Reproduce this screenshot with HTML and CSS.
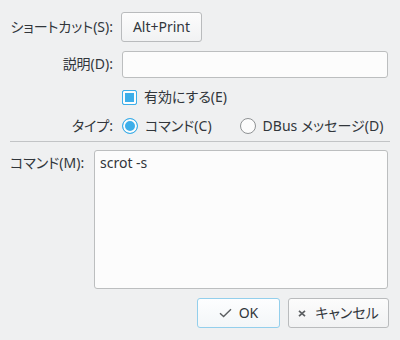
FILE: index.html
```html
<!DOCTYPE html>
<html lang="ja">
<head>
    <meta charset="UTF-8">
    <title>ショートカットの編集</title>
    <link rel="stylesheet" href="styles.css">
</head>
<body>
    <div class="dialog">
        <div class="form">
            <label class="lbl">ショートカット(S):</label>
            <div><button class="btn key">Alt+Print</button></div>

            <label class="lbl" for="desc">説明(D):</label>
            <input class="field" id="desc" type="text">

            <span></span>
            <label class="check"><span class="box"></span>有効にする(E)</label>

            <span class="lbl">タイプ:</span>
            <div class="radios">
                <label class="radio"><span class="dot on"></span>コマンド(C)</label>
                <label class="radio"><span class="dot"></span>DBus メッセージ(D)</label>
            </div>
        </div>

        <div class="sep"></div>

        <div class="cmd">
            <label class="lbl top" for="cmd">コマンド(M):</label>
            <textarea id="cmd" class="area">scrot -s</textarea>
        </div>

        <div class="actions">
            <button class="btn ok">
                <svg width="13" height="10" viewBox="0 0 13 10"><path d="M1 5.2 L4.6 8.6 L12 1.2" fill="none" stroke="#5b5e61" stroke-width="1.4"/></svg>
                OK
            </button>
            <button class="btn cancel">
                <svg width="8" height="7" viewBox="0 0 8 7"><path d="M1 0.8 L7 6.2 M7 0.8 L1 6.2" fill="none" stroke="#5b5e61" stroke-width="1.7"/></svg>
                キャンセル
            </button>
        </div>
    </div>
</body>
</html>
```

FILE: styles.css
```css
body {
    margin: 0;
    background-color: #eff0f1;
    color: #31363b;
    font-family: "Noto Sans", "Noto Sans CJK JP", sans-serif;
    font-size: 14px;
    font-feature-settings: "palt";
    line-height: 1.3;
}
.dialog {
    padding: 12px 12px 12px 10px;
}
.form {
    display: grid;
    grid-template-columns: minmax(103px, auto) 1fr;
    grid-template-rows: 30px 27px 20px 20px;
    column-gap: 8px;
    row-gap: 9px;
    align-items: center;
}
.lbl {
    text-align: right;
    white-space: nowrap;
}
.btn {
    height: 30px;
    font: inherit;
    color: #31363b;
    background: linear-gradient(#fcfcfc, #f1f2f3);
    border: 1px solid #b9bbbd;
    border-radius: 3px;
    display: inline-flex;
    align-items: center;
    justify-content: center;
    gap: 7px;
    padding: 0 8px;
    white-space: nowrap;
}
.key {
    width: 81px;
}
.field {
    height: 27px;
    margin: 0 0 0 1px;
    box-sizing: border-box;
    background-color: #fcfcfc;
    border: 1px solid #bcbebf;
    border-radius: 3px;
}
.check, .radio {
    display: flex;
    align-items: center;
    gap: 7px;
    white-space: nowrap;
}
.check {
    margin-left: 1px;
}
.box {
    width: 13px;
    height: 13px;
    border: 1px solid #3daee9;
    border-radius: 2px;
    background-color: #3daee9;
    box-shadow: inset 0 0 0 2px #fcfcfc;
}
.radios {
    display: flex;
    gap: 28px;
    margin-left: 1px;
}
.dot {
    width: 14px;
    height: 14px;
    border: 1px solid #8f9294;
    border-radius: 50%;
    background-color: #fcfcfc;
}
.dot.on {
    border-color: #3daee9;
    background-color: #3daee9;
    box-shadow: inset 0 0 0 2px #fcfcfc;
}
.sep {
    height: 1px;
    background-color: #c2c4c6;
    margin: 5px -2px 8px 0;
}
.cmd {
    display: grid;
    grid-template-columns: 76px 1fr;
    column-gap: 8px;
}
.top {
    text-align: left;
    padding-top: 4px;
}
.area {
    height: 139px;
    box-sizing: border-box;
    margin: 0;
    padding: 3px 5px;
    font: inherit;
    color: #31363b;
    background-color: #fcfcfc;
    border: 1px solid #bcbebf;
    border-radius: 3px;
    resize: none;
}
.actions {
    display: flex;
    justify-content: flex-end;
    gap: 8px;
    margin-top: 9px;
    margin-right: -1px;
}
.ok {
    width: 83px;
    border-color: #93cfec;
    background: linear-gradient(#fdfeff, #f3f6f8);
}
.cancel {
    width: 101px;
    gap: 9px;
}
```
